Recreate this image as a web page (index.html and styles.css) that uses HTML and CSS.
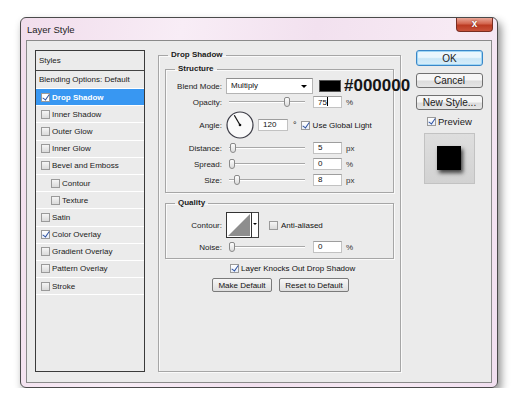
FILE: index.html
```html
<!DOCTYPE html>
<html lang="en">
<head>
  <meta charset="UTF-8" />
  <title>Layer Style</title>
  <link rel="stylesheet" href="styles.css">
</head>
<body>

  <div class="window">
    <div class="titlebar">
      <span class="title">Layer Style</span>
      <span class="close">x</span>
    </div>

    <div class="client">

      <!-- left: list of effects -->
      <div class="styles">
        <div class="styles-head">Styles</div>
        <div class="item plain">Blending Options: Default</div>
        <div class="item sel"><span class="cb on"></span>Drop Shadow</div>
        <div class="item"><span class="cb"></span>Inner Shadow</div>
        <div class="item"><span class="cb"></span>Outer Glow</div>
        <div class="item"><span class="cb"></span>Inner Glow</div>
        <div class="item"><span class="cb"></span>Bevel and Emboss</div>
        <div class="item sub"><span class="cb"></span>Contour</div>
        <div class="item sub"><span class="cb"></span>Texture</div>
        <div class="item"><span class="cb"></span>Satin</div>
        <div class="item"><span class="cb on"></span>Color Overlay</div>
        <div class="item"><span class="cb"></span>Gradient Overlay</div>
        <div class="item"><span class="cb"></span>Pattern Overlay</div>
        <div class="item"><span class="cb"></span>Stroke</div>
      </div>

      <!-- middle: drop shadow settings -->
      <fieldset class="group main">
        <legend>Drop Shadow</legend>

        <fieldset class="group inner structure">
          <legend>Structure</legend>
          <div class="row">
            <span class="lbl">Blend Mode:</span>
            <div class="select">Multiply<span class="arrow"></span></div>
            <span class="swatch"></span>
            <span class="hex">#000000</span>
          </div>
          <div class="row">
            <span class="lbl">Opacity:</span>
            <div class="slider"><span class="thumb" style="left: 55px"></span></div>
            <div class="field">75<span class="caret"></span></div>
            <span class="unit">%</span>
          </div>
          <div class="row angle">
            <span class="lbl">Angle:</span>
            <svg class="dial" width="28" height="28" viewBox="0 0 28 28">
              <circle cx="14" cy="14" r="13" fill="#fafafa" stroke="#3c3c46" stroke-width="1.2"/>
              <line x1="14" y1="14" x2="8.3" y2="4.3" stroke="#111" stroke-width="1.2"/>
              <circle cx="14" cy="14" r="1.3" fill="#111"/>
            </svg>
            <div class="field wide">120</div>
            <span class="deg">°</span>
            <span class="cb on"></span>
            <span class="cb-text">Use Global Light</span>
          </div>
          <div class="row">
            <span class="lbl">Distance:</span>
            <div class="slider"><span class="thumb" style="left: 1px"></span></div>
            <div class="field">5</div>
            <span class="unit">px</span>
          </div>
          <div class="row">
            <span class="lbl">Spread:</span>
            <div class="slider"><span class="thumb" style="left: 0px"></span></div>
            <div class="field">0</div>
            <span class="unit">%</span>
          </div>
          <div class="row">
            <span class="lbl">Size:</span>
            <div class="slider"><span class="thumb" style="left: 5px"></span></div>
            <div class="field">8</div>
            <span class="unit">px</span>
          </div>
        </fieldset>

        <fieldset class="group inner quality">
          <legend>Quality</legend>
          <div class="row contour">
            <span class="lbl">Contour:</span>
            <svg class="curve" width="26" height="26" viewBox="0 0 26 26">
              <rect x="0.5" y="0.5" width="25" height="25" fill="#fff" stroke="#333"/>
              <polygon points="2,24 24,2 24,24" fill="#8e8e8e"/>
            </svg>
            <span class="curve-btn"><span class="arrow"></span></span>
            <span class="cb"></span>
            <span class="cb-text">Anti-aliased</span>
          </div>
          <div class="row noise">
            <span class="lbl">Noise:</span>
            <div class="slider"><span class="thumb" style="left: 0px"></span></div>
            <div class="field">0</div>
            <span class="unit">%</span>
          </div>
        </fieldset>

        <div class="knock"><span class="cb on"></span><span class="cb-text">Layer Knocks Out Drop Shadow</span></div>
        <div class="actions">
          <button class="small">Make Default</button>
          <button class="small reset">Reset to Default</button>
        </div>
      </fieldset>

      <!-- right: dialog buttons + preview -->
      <div class="side">
        <button class="btn ok">OK</button>
        <button class="btn">Cancel</button>
        <button class="btn">New Style...</button>
        <div class="preview-check"><span class="cb on"></span>Preview</div>
        <div class="preview"><div class="preview-square"></div></div>
      </div>

    </div>
  </div>

</body>
</html>
```

FILE: styles.css
```css
* { box-sizing: border-box; }

html, body {
  margin: 0;
  padding: 0;
  background: #fff;
  font-family: 'Liberation Sans', Arial, sans-serif;
  color: #111;
}

body {
  padding: 17px 0 0 20px;
}

.window {
  width: 478px;
  height: 371px;
  border: 1px solid #4a4a4a;
  border-radius: 6px;
  background: linear-gradient(100deg, #f1ddec 0%, #f8edf6 30%, #f2e1ef 55%, #f7eaf4 80%, #f1dff0 100%);
  box-shadow: 3px 5px 8px rgba(0, 0, 0, 0.45);
}

.titlebar {
  height: 22px;
  display: flex;
  align-items: center;
}

.title {
  padding-left: 6px;
  font-size: 9.5px;
  color: #1d1d1d;
}

.close {
  align-self: flex-start;
  margin-left: auto;
  margin-right: 4px;
  width: 37px;
  height: 14px;
  border: 1px solid #7a2d22;
  border-top: none;
  border-radius: 0 0 4px 4px;
  background: linear-gradient(#eaa697, #d2634c 45%, #bb3a22 55%, #c9523a);
  color: #fff;
  font-weight: bold;
  font-size: 10px;
  line-height: 12px;
  text-align: center;
  text-shadow: 0 0 2px #5a1b12;
}

.client {
  margin: 0 5px;
  height: 343px;
  border: 1px solid #8a8a8a;
  background: #ebebeb;
  display: flex;
  align-items: flex-start;
  padding: 9px 0 0 8px;
}

/* styles list */
.styles {
  width: 110px;
  height: 322px;
  flex: none;
  border: 1px solid #3a3a3a;
  background: #ebebeb;
  font-size: 8px;
}

.styles-head {
  height: 20px;
  border-bottom: 1px solid #444;
  padding-left: 3px;
  line-height: 19px;
  color: #222;
}

.item {
  height: 17.2px;
  border-bottom: 1px solid #fff;
  display: flex;
  align-items: center;
  gap: 2px;
  padding-left: 5px;
  color: #1a1a1a;
}

.item.plain {
  height: 18px;
  padding-left: 3px;
}

.item.sub { padding-left: 15px; }

.item.sel {
  background: #3897f2;
  color: #fff;
  font-weight: bold;
}

.item.sel .cb { background: #fff; }

/* checkboxes */
.cb {
  position: relative;
  display: inline-block;
  flex: none;
  width: 9px;
  height: 9px;
  border: 1px solid #9a9a9a;
  background: linear-gradient(#f5f5f5, #dadada);
}

.cb.on { background: linear-gradient(#fff, #e8eef8); }

.cb.on::after {
  content: '';
  position: absolute;
  left: 2px;
  top: -1px;
  width: 3px;
  height: 6px;
  border: solid #2a4fa0;
  border-width: 0 1.5px 1.5px 0;
  transform: rotate(35deg);
}

.cb-text {
  font-size: 8px;
  margin-left: 3px;
}

/* group boxes */
fieldset.group {
  margin: 0;
  min-width: 0;
  border: 1px solid #a6a6a6;
  box-shadow: inset 1px 1px #fafafa, 1px 1px #fafafa;
}

fieldset.group legend {
  padding: 0 3px;
  font-size: 8px;
  font-weight: bold;
  line-height: 10px;
  color: #1a1a1a;
}

.main {
  margin-left: 13px !important;
  flex: none;
  width: 243px;
  height: 322px;
  padding: 4px 6px 0;
}

.main > legend { margin-left: 3px; }

.inner {
  width: 229px;
  padding: 4px 0;
}

.inner > legend { margin-left: 9px; }

.quality {
  margin-top: 5px !important;
  padding: 4px 0 3px;
}

.row {
  height: 16px;
  display: flex;
  align-items: center;
  font-size: 8px;
}

.row > * { flex: none; }

.row.angle { height: 30px; }
.row.contour { height: 26px; }
.row.noise { margin-top: 1px; }

.lbl {
  width: 56px;
  margin-right: 4px;
  text-align: right;
  color: #222;
}

.select {
  position: relative;
  width: 87px;
  height: 16px;
  border: 1px solid #b4b4b4;
  border-top-color: #8f8f8f;
  background: #fff;
  padding-left: 4px;
  line-height: 14px;
}

.arrow {
  position: absolute;
  right: 5px;
  top: 6px;
  border-left: 3px solid transparent;
  border-right: 3px solid transparent;
  border-top: 3px solid #000;
}

.swatch {
  width: 22px;
  height: 12px;
  margin-left: 6px;
  border: 1px solid #555;
  background: #000;
}

.hex {
  margin-left: 3px;
  font-size: 17px;
  font-weight: bold;
  line-height: 16px;
  color: #161616;
  white-space: nowrap;
}

.slider {
  position: relative;
  width: 76px;
  height: 12px;
  margin-left: 3px;
}

.slider::before {
  content: '';
  position: absolute;
  left: 0;
  right: 0;
  top: 5px;
  height: 1px;
  background: #a8a8a8;
  box-shadow: 0 1px #fff;
}

.thumb {
  position: absolute;
  top: 1px;
  width: 6px;
  height: 10px;
  border: 1px solid #8a8a8a;
  border-radius: 2px 2px 3px 3px;
  background: linear-gradient(#fdfdfd, #dcdcdc);
}

.field {
  width: 29px;
  height: 12px;
  margin-left: 8px;
  border: 1px solid #c2c2c2;
  border-top-color: #9e9e9e;
  background: #fff;
  padding-left: 4px;
  line-height: 10px;
  font-size: 8px;
}

.caret {
  display: inline-block;
  width: 1px;
  height: 9px;
  background: #000;
  vertical-align: -1px;
}

.field.wide {
  width: 30px;
  margin-left: 4px;
}

.unit {
  margin-left: 4px;
  color: #333;
}

.deg {
  margin-left: 5px;
  margin-right: 4px;
  font-size: 9px;
}

.curve-btn {
  position: relative;
  width: 7px;
  height: 26px;
  border: 1px solid #444;
  border-left: none;
  background: #fff;
}

.curve-btn .arrow {
  right: 1px;
  top: 10px;
  border-width: 2.5px 2px 0;
}

.contour .cb { margin-left: 10px; }

.knock {
  height: 16px;
  margin: 1px 0 0 65px;
  display: flex;
  align-items: center;
}

.knock .cb-text { margin-left: 2px; }

.actions {
  display: flex;
  gap: 7px;
  margin: 2px 0 0 47px;
}

button.small {
  width: 60px;
  height: 14px;
  padding: 0;
  border: 1px solid #7a7a7a;
  border-radius: 2px;
  background: linear-gradient(#f7f7f7, #dedede);
  font-family: 'Liberation Sans', Arial, sans-serif;
  font-size: 8px;
  color: #111;
}

button.small.reset { width: 70px; }

/* right column */
.side {
  margin-left: 15px;
  width: 67px;
  flex: none;
  display: flex;
  flex-direction: column;
}

.btn {
  width: 67px;
  height: 15px;
  margin-bottom: 7px;
  padding: 0;
  border: 1px solid #707070;
  border-radius: 3px;
  background: linear-gradient(#f6f6f6 45%, #dcdcdc 55%, #e6e6e6);
  font-family: 'Liberation Sans', Arial, sans-serif;
  font-size: 10px;
  color: #1b1b1b;
}

.btn.ok {
  height: 16px;
  border-color: #3a87c8;
  box-shadow: inset 0 0 0 1px #9fd6f5;
  background: linear-gradient(#eaf6fd 45%, #c9e6f7 55%, #d8eef9);
}

.preview-check {
  height: 14px;
  margin: -3px 0 0 11px;
  display: flex;
  align-items: center;
  gap: 2px;
  font-size: 9.5px;
  color: #1b1b1b;
}

.preview {
  width: 51px;
  height: 51px;
  margin: 5px 0 0 8px;
  border: 1px solid #c2c2c2;
  background: linear-gradient(#dedede, #d2d2d2);
  padding: 12px;
}

.preview-square {
  width: 24px;
  height: 24px;
  background: #000;
  box-shadow: 2px 3px 4px rgba(0, 0, 0, 0.7);
}
```
